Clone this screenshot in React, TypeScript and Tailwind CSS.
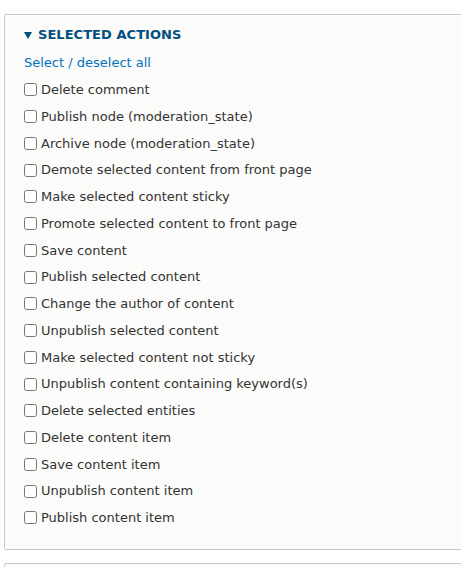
import React from "react";

const items = [
  "Delete comment",
  "Publish node (moderation_state)",
  "Archive node (moderation_state)",
  "Demote selected content from front page",
  "Make selected content sticky",
  "Promote selected content to front page",
  "Save content",
  "Publish selected content",
  "Change the author of content",
  "Unpublish selected content",
  "Make selected content not sticky",
  "Unpublish content containing keyword(s)",
  "Delete selected entities",
  "Delete content item",
  "Save content item",
  "Unpublish content item",
  "Publish content item",
];

export default function App() {
  return (
    <div
      className="w-[461px] h-[567px] overflow-hidden bg-white pt-[14px] pl-[4px]"
      style={{ fontFamily: '"DejaVu Sans", Verdana, sans-serif' }}
    >
      <div className="w-[470px] h-[536px] border border-[#c8c8c6] rounded-[2px] bg-[#fbfbf9] pl-[19px] pt-[10px]">
        <div className="h-[20px] flex items-center gap-[6px] text-[13px] font-bold text-[#004f80] tracking-[0.05px]">
          <svg width="8" height="7" viewBox="0 0 8 7" className="shrink-0">
            <polygon points="0,0 8,0 4,7" fill="#004f80" />
          </svg>
          <span>SELECTED ACTIONS</span>
        </div>
        <div className="mt-[9px] h-[18px] flex items-center text-[13px] text-[#0074bd]">
          Select / deselect all
        </div>
        <div className="mt-[4.5px] flex flex-col">
          {items.map((t) => (
            <label key={t} className="h-[26.75px] flex items-center text-[13px] text-[#333]">
              <input type="checkbox" className="m-0 mr-[4px] w-[13px] h-[13px]" />
              <span>{t}</span>
            </label>
          ))}
        </div>
      </div>
      <div className="mt-[13px] w-[470px] h-[20px] border border-[#c8c8c6] rounded-[2px] bg-[#fbfbf9]" />
    </div>
  );
}
